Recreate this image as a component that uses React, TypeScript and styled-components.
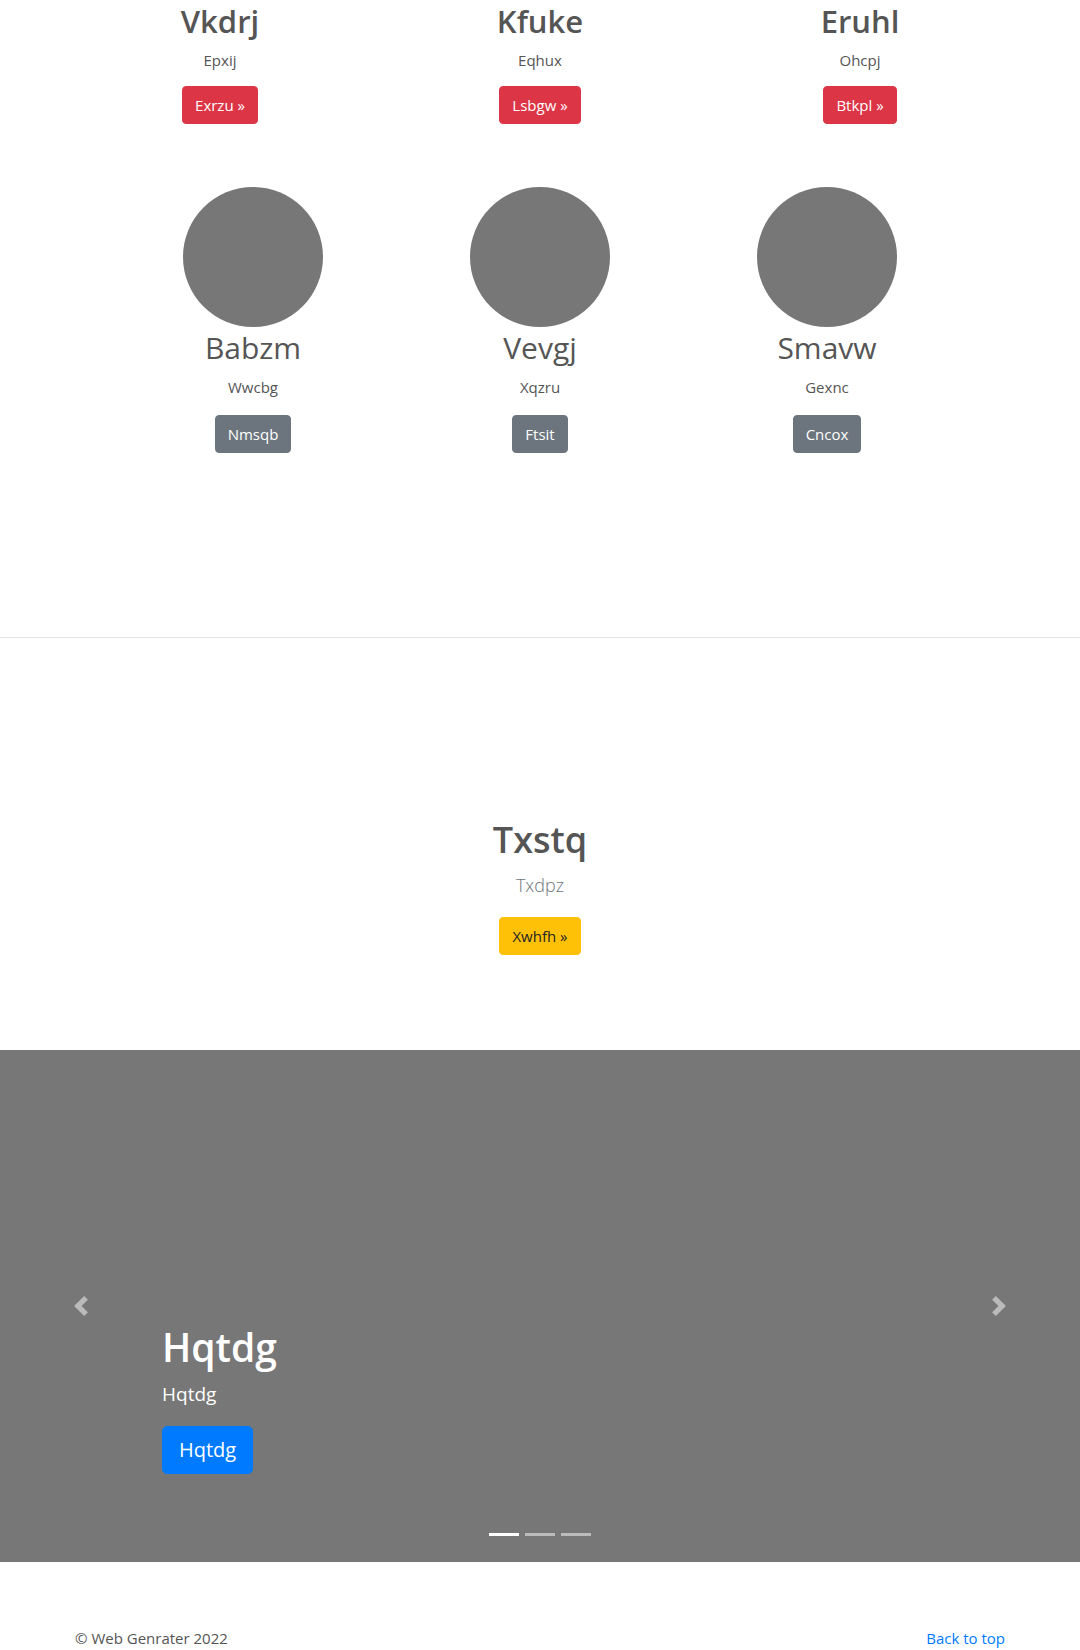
import React from 'react';
import styled, { createGlobalStyle, css } from 'styled-components';

type Variant = 'danger' | 'secondary' | 'warning' | 'primary';

interface Feature {
  title: string;
  text: string;
  action: string;
}

const topFeatures: Feature[] = [
  { title: 'Vkdrj', text: 'Epxij', action: 'Exrzu »' },
  { title: 'Kfuke', text: 'Eqhux', action: 'Lsbgw »' },
  { title: 'Eruhl', text: 'Ohcpj', action: 'Btkpl »' },
];

const people: Feature[] = [
  { title: 'Babzm', text: 'Wwcbg', action: 'Nmsqb' },
  { title: 'Vevgj', text: 'Xqzru', action: 'Ftsit' },
  { title: 'Smavw', text: 'Gexnc', action: 'Cncox' },
];

const slides = [0, 1, 2];

const GlobalStyle = createGlobalStyle`
  html, body {
    margin: 0;
    padding: 0;
    background: #fff;
  }
  body {
    font-family: "Open Sans", "Noto Sans", "Liberation Sans", sans-serif;
    font-size: 16px;
    line-height: 1.5;
    color: #555;
    overflow: hidden;
  }
  * {
    box-sizing: border-box;
  }
`;

const variants: Record<Variant, ReturnType<typeof css>> = {
  danger: css`
    background-color: #dc3545;
    border-color: #dc3545;
    color: #fff;
  `,
  secondary: css`
    background-color: #6c757d;
    border-color: #6c757d;
    color: #fff;
  `,
  warning: css`
    background-color: #ffc107;
    border-color: #ffc107;
    color: #212529;
  `,
  primary: css`
    background-color: #007bff;
    border-color: #007bff;
    color: #fff;
  `,
};

const Button = styled.a<{ $variant: Variant; $large?: boolean }>`
  display: inline-block;
  font-weight: 400;
  text-decoration: none;
  border: 1px solid transparent;
  border-radius: 4px;
  padding: 6px 12px;
  font-size: 15px;
  line-height: 24px;
  cursor: pointer;
  ${props => variants[props.$variant]}
  ${props =>
    props.$large &&
    css`
      padding: 8px 16px;
      font-size: 20px;
      line-height: 30px;
      border-radius: 5px;
    `}
`;

const Page = styled.div`
  width: 1080px;
`;

const FeatureRow = styled.div`
  width: 960px;
  margin: 0 auto;
  display: grid;
  grid-template-columns: repeat(3, 320px);
`;

const FeatureCol = styled.div`
  display: flex;
  flex-direction: column;
  align-items: center;
  text-align: center;
`;

const FeatureTitle = styled.h2`
  margin: 0 0 6px;
  font-size: 31px;
  line-height: 42px;
  font-weight: 600;
  color: #555;
`;

const FeatureText = styled.p<{ $gap?: number }>`
  margin: 0 0 ${props => props.$gap ?? 14}px;
  font-size: 15px;
  line-height: 24px;
`;

const PeopleRow = styled.div`
  width: 861px;
  margin: 63px auto 0;
  display: grid;
  grid-template-columns: repeat(3, 287px);
`;

const Avatar = styled.div`
  width: 140px;
  height: 140px;
  border-radius: 50%;
  background: #777;
`;

const PersonName = styled.h2`
  margin: 2px 0 8px;
  font-size: 30px;
  line-height: 38px;
  font-weight: 400;
  color: #555;
`;

const Divider = styled.hr`
  margin: 184px 0 0;
  border: 0;
  border-top: 1px solid rgba(0, 0, 0, 0.1);
`;

const Spotlight = styled.section`
  margin-top: 180px;
  display: flex;
  flex-direction: column;
  align-items: center;
  text-align: center;
`;

const SpotlightTitle = styled.h2`
  margin: 0 0 8px;
  font-size: 36px;
  line-height: 44px;
  font-weight: 600;
  color: #555;
`;

const Lead = styled.p`
  margin: 0 0 17px;
  font-size: 18px;
  line-height: 30px;
  font-weight: 300;
  color: #6c757d;
`;

const Carousel = styled.div`
  position: relative;
  margin-top: 95px;
  height: 512px;
  background: #777;
`;

const Control = styled.a<{ $side: 'prev' | 'next' }>`
  position: absolute;
  top: 0;
  bottom: 0;
  ${props => (props.$side === 'prev' ? 'left: 0;' : 'right: 0;')}
  width: 15%;
  display: flex;
  align-items: center;
  justify-content: center;
  opacity: 0.5;
`;

const Caption = styled.div`
  position: absolute;
  left: 15%;
  right: 15%;
  bottom: 88px;
  color: #fff;
  text-align: left;
`;

const CaptionTitle = styled.h1`
  margin: 0 0 8px;
  font-size: 39px;
  line-height: 48px;
  font-weight: 600;
`;

const CaptionText = styled.p`
  margin: 0 0 17px;
  font-size: 19px;
  line-height: 30px;
`;

const Indicators = styled.ol`
  position: absolute;
  left: 0;
  right: 0;
  bottom: 26px;
  margin: 0;
  padding: 0;
  list-style: none;
  display: flex;
  justify-content: center;
`;

const Indicator = styled.li<{ $active?: boolean }>`
  width: 30px;
  height: 3px;
  margin: 0 3px;
  background: #fff;
  opacity: ${props => (props.$active ? 1 : 0.5)};
`;

const Footer = styled.footer`
  width: 960px;
  margin: 64px auto 0;
  padding: 0 15px;
  display: flex;
  justify-content: space-between;
  font-size: 15px;
  line-height: 24px;
`;

const FooterText = styled.p`
  margin: 0;
`;

const BackLink = styled.a`
  color: #007bff;
  text-decoration: none;
`;

const Chevron: React.FC<{ flip?: boolean }> = ({ flip }) => (
  <svg width="20" height="20" viewBox="0 0 8 8" fill="#fff">
    <path
      d={flip ? 'M2.75 0l-1.5 1.5L3.75 4l-2.5 2.5L2.75 8l4-4-4-4z' : 'M5.25 0l-4 4 4 4 1.5-1.5L4.25 4l2.5-2.5L5.25 0z'}
    />
  </svg>
);

const App: React.FC = () => {
  return (
    <Page>
      <GlobalStyle />

      <FeatureRow>
        {topFeatures.map(f => (
          <FeatureCol key={f.title}>
            <FeatureTitle>{f.title}</FeatureTitle>
            <FeatureText>{f.text}</FeatureText>
            <Button $variant="danger">{f.action}</Button>
          </FeatureCol>
        ))}
      </FeatureRow>

      <PeopleRow>
        {people.map(p => (
          <FeatureCol key={p.title}>
            <Avatar />
            <PersonName>{p.title}</PersonName>
            <FeatureText $gap={16}>{p.text}</FeatureText>
            <Button $variant="secondary">{p.action}</Button>
          </FeatureCol>
        ))}
      </PeopleRow>

      <Divider />

      <Spotlight>
        <SpotlightTitle>Txstq</SpotlightTitle>
        <Lead>Txdpz</Lead>
        <Button $variant="warning">Xwhfh »</Button>
      </Spotlight>

      <Carousel>
        <Caption>
          <CaptionTitle>Hqtdg</CaptionTitle>
          <CaptionText>Hqtdg</CaptionText>
          <Button $variant="primary" $large>
            Hqtdg
          </Button>
        </Caption>
        <Control $side="prev">
          <Chevron />
        </Control>
        <Control $side="next">
          <Chevron flip />
        </Control>
        <Indicators>
          {slides.map(i => (
            <Indicator key={i} $active={i === 0} />
          ))}
        </Indicators>
      </Carousel>

      <Footer>
        <FooterText>© Web Genrater 2022</FooterText>
        <BackLink>Back to top</BackLink>
      </Footer>
    </Page>
  );
};

export default App;
